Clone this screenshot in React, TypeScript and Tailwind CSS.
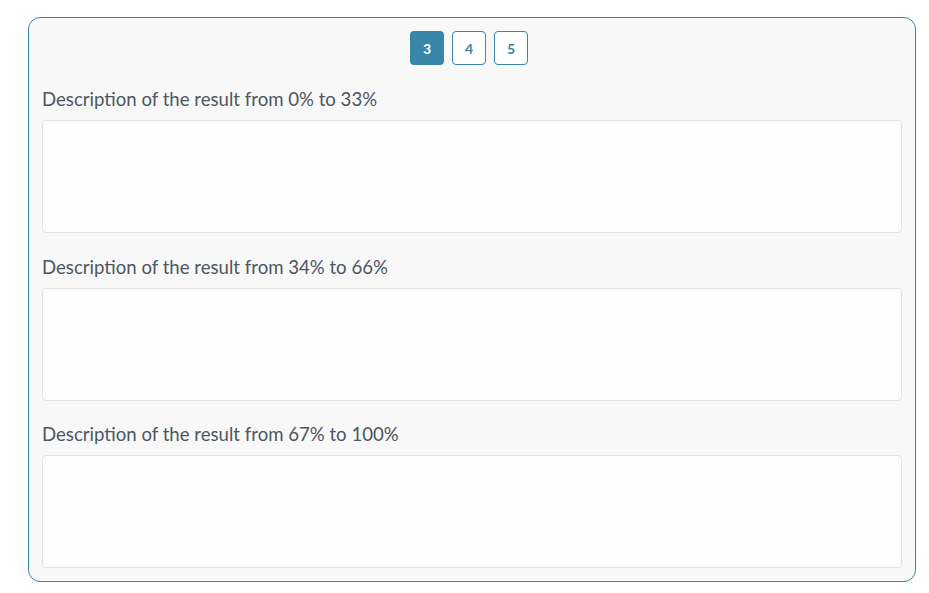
export default function App() {
  const ranges = ["0% to 33%", "34% to 66%", "67% to 100%"];
  return (
    <div className="min-h-[593px] w-[929px] bg-white pt-[17px] pl-[28px]" style={{ fontFamily: '"Source Sans Pro", Lato, "Noto Sans", sans-serif' }}>
      <div className="w-[888px] h-[565px] rounded-[12px] border border-[#3a86a8] bg-[#f8f8f8] px-[13px] pt-[13px]">
        <div className="flex justify-center gap-[8px] pr-[6px]">
          <button className="w-[34px] h-[34px] rounded-[4px] bg-[#3a86a8] text-white text-[14px] font-bold flex items-center justify-center">3</button>
          <button className="w-[34px] h-[34px] rounded-[4px] border border-[#3a86a8] bg-white text-[#3a86a8] text-[14px] font-bold flex items-center justify-center">4</button>
          <button className="w-[34px] h-[34px] rounded-[4px] border border-[#3a86a8] bg-white text-[#3a86a8] text-[14px] font-bold flex items-center justify-center">5</button>
        </div>
        {ranges.map((r, i) => (
          <div key={r} className={i === 2 ? "mt-[22px]" : "mt-[23px]"}>
            <div className="h-[22px] leading-[22px] text-[18.6px] text-[#4d5661] mb-[10px]">Description of the result from {r}</div>
            <div className="h-[113px] rounded-[4px] border border-[#dfe2e6] bg-[#fdfdfd]"></div>
          </div>
        ))}
      </div>
    </div>
  );
}
